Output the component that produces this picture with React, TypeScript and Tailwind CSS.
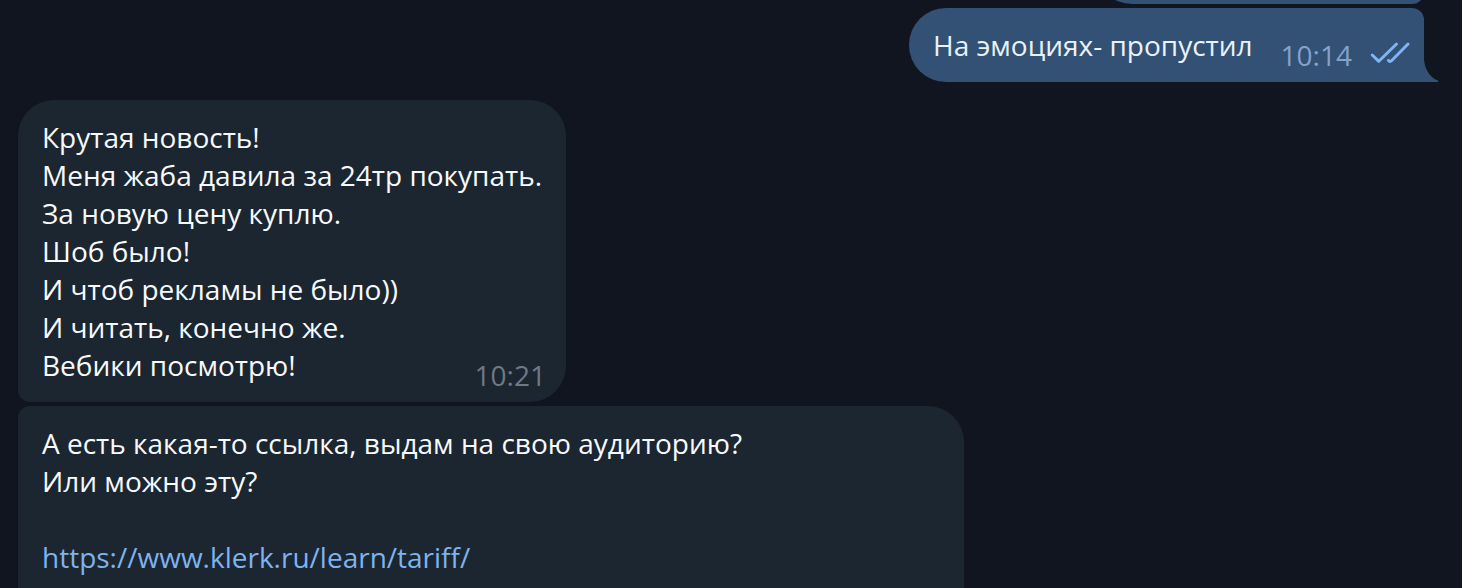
import React from "react";

function Checks() {
  return (
    <svg width="40" height="24" viewBox="0 0 40 24" fill="none" stroke="#7db6f2" strokeWidth="3" strokeLinecap="round" strokeLinejoin="round" role="img" aria-label="Прочитано">
      <path d="M2.200 15L8.800 21.300L26.500 4" />
      <path d="M18.500 20.500Q20 22.300 21.500 20.800L38 4" />
    </svg>
  );
}

export default function App() {
  return (
    <main className="h-screen overflow-hidden bg-[#10151f] font-['Open_Sans','Noto_Sans',sans-serif] text-[28px] leading-[38px] text-[#f7fafd]">
      <section className="flex flex-col items-end pr-[38px]">
        <div className="flex h-1 w-[328px] flex-col justify-end overflow-hidden">
          <div className="h-10 shrink-0 rounded-bl-[36px] rounded-br-[12px] bg-[#335174]" />
        </div>
        <article className="relative mt-1 flex h-[74px] items-start rounded-l-[37px] rounded-tr-[12px] bg-[#335174] pl-6 pr-[14px]">
          <p className="mt-[18px] text-[#e9f2fb]">На эмоциях- пропустил</p>
          <time className="ml-7 mt-7 text-[#84a2ca]">10:14</time>
          <span className="ml-[18px] mt-8"><Checks /></span>
          <svg className="absolute bottom-0 left-full" width="16" height="30" viewBox="0 0 16 30" fill="#335174" aria-hidden="true">
            <path d="M0 0V8C1 17 6 26 14 28.500V30H0Z" />
          </svg>
        </article>
      </section>
      <section className="flex flex-col items-start gap-1 px-[18px] pt-[18px]">
        <article className="flex w-[548px] items-end justify-between rounded-[36px] rounded-bl-[12px] bg-[#1c2630] pb-[18px] pl-6 pr-5 pt-[18px]">
          <p className="whitespace-nowrap">
            Крутая новость!<br />
            Меня жаба давила за 24тр покупать.<br />
            За новую цену куплю.<br />
            Шоб было!<br />
            И чтоб рекламы не было))<br />
            И читать, конечно же.<br />
            Вебики посмотрю!
          </p>
          <time className="-mb-[10px] -ml-20 text-[#6e7985]">10:21</time>
        </article>
        <article className="w-[946px] max-w-full rounded-tl-[12px] rounded-tr-[36px] bg-[#1c2630] px-6 pb-8 pt-[18px]">
          <p>
            А есть какая-то ссылка, выдам на свою аудиторию?<br />
            Или можно эту?
          </p>
          <a className="mt-[38px] block w-fit text-[#7db3ee]" href="https://www.klerk.ru/learn/tariff/">https://www.klerk.ru/learn/tariff/</a>
        </article>
      </section>
    </main>
  );
}
